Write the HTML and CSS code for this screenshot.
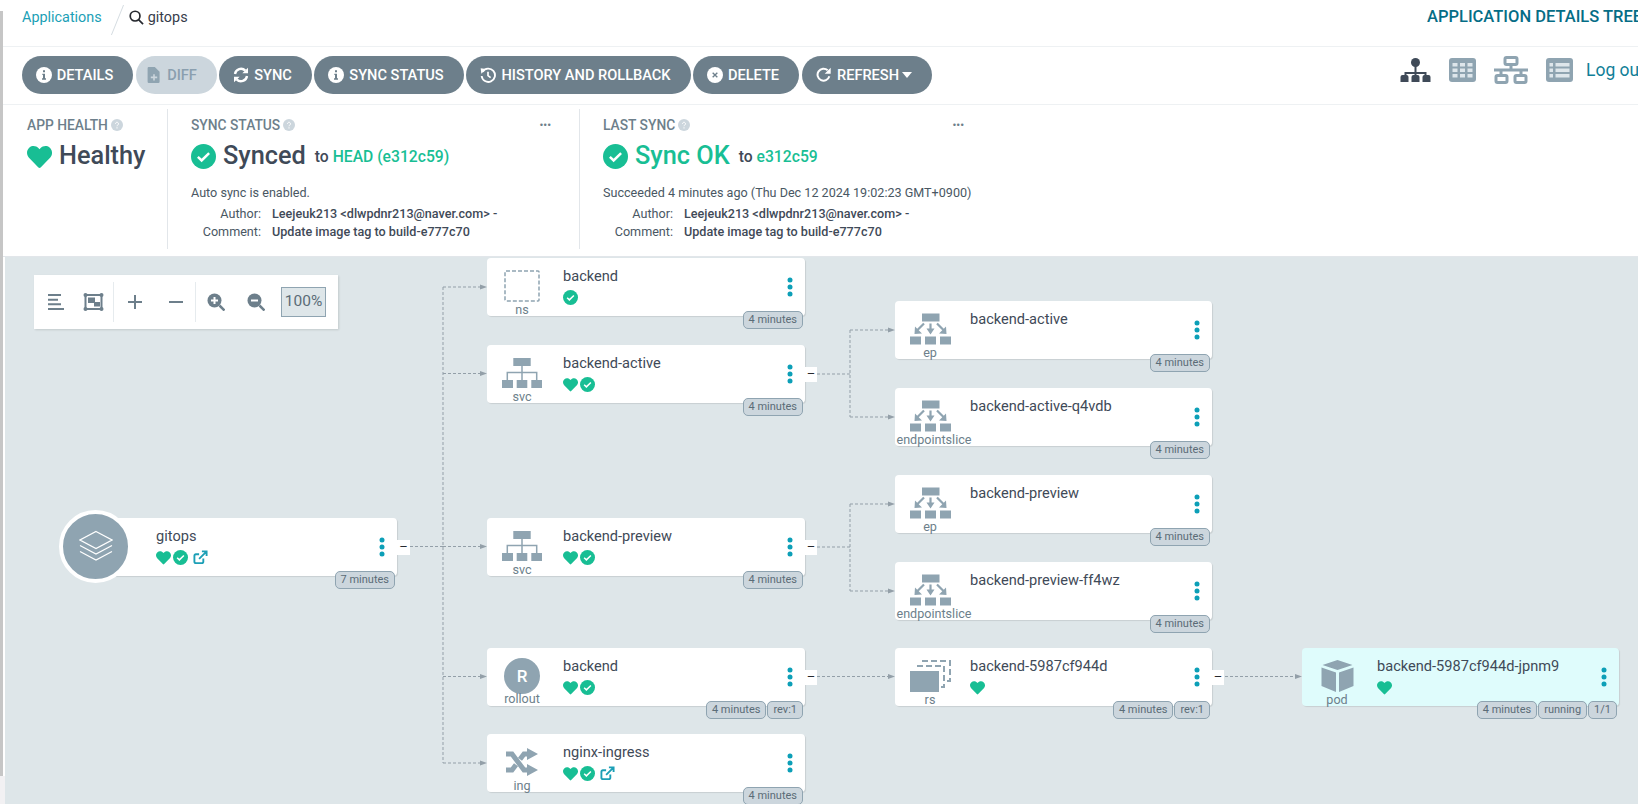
FILE: index.html
```html
<!DOCTYPE html>
<html lang="en">
<head>
<meta charset="utf-8">
<title>gitops - Application Details</title>
<link rel="stylesheet" href="styles.css">
</head>
<body>
<svg width="0" height="0" class="defs">
  <defs>
    <symbol id="heart" viewBox="0 0 512 512"><path d="M462 73c-55-47-137-38-188 14l-18 19-18-19C187 35 105 26 50 73c-63 54-66 150-10 208l194 200c12 13 33 13 45 0l194-200c56-58 53-154-11-208z"/></symbol>
    <symbol id="check" viewBox="0 0 24 24"><circle cx="12" cy="12" r="12"/><path d="M6.600 12.400l3.600 3.400 7.200-7" fill="none" stroke="#fff" stroke-width="2.400"/></symbol>
    <symbol id="ext" viewBox="0 0 16 16"><path d="M11 9v3.500a1.500 1.500 0 0 1-1.500 1.500H3a1.500 1.500 0 0 1-1.500-1.500V6A1.500 1.500 0 0 1 3 4.500h3.500M6.500 9.500l7-7M9.500 1.500h5v5" fill="none" stroke="currentColor" stroke-width="2"/></symbol>
    <symbol id="info" viewBox="0 0 24 24"><circle cx="12" cy="12" r="12" fill="#fff"/><path d="M9.500 10h4v7h1.500v2H9v-2h1.500v-5h-1zM10.500 5h3v3h-3z" fill="#6d7f8b"/></symbol>
    <symbol id="help" viewBox="0 0 24 24"><circle cx="12" cy="12" r="12" fill="#ccd6dd"/><path d="M9 9.500a3 3 0 1 1 4.500 2.600c-1 .6-1.500 1-1.500 2.400M12 16.500v2.500" fill="none" stroke="#fff" stroke-width="2"/></symbol>
    <symbol id="net" viewBox="0 0 40 30"><path d="M11.300 0h17.400v8H11.300zM0 22h11v8H0zM14.700 22h10.600v8H14.700zM29.300 22H40v8H29.300z"/><path d="M20 8v14M5.300 22v-7.400h29.400V22" fill="none" stroke="currentColor" stroke-width="1.500"/></symbol>
    <symbol id="ep" viewBox="0 0 41 31"><path d="M12 0h17.500v8H12zM0 23h11v8H0zM15 23h11v8H15zM30 23h11v8H30z"/><path d="M16.500 15h8l-4 6zM4.500 20.500L5 13l7 7zM36.500 20.500L36 13l-7 7z"/><path d="M20.500 10v7M14 10l-7 7M27 10l7 7" fill="none" stroke="currentColor" stroke-width="2.200"/></symbol>
    <symbol id="dots" viewBox="0 0 6 20"><circle cx="3" cy="3" r="2.500"/><circle cx="3" cy="10" r="2.500"/><circle cx="3" cy="17" r="2.500"/></symbol>
  </defs>
</svg>

<div class="page">
  <div class="side">
    <div class="side-strip"></div>
    <div class="side-foot"></div>
  </div>
  <main class="content">
    <header class="topbar">
      <nav class="crumbs">
        <a class="crumb-link">Applications</a>
        <span class="crumb-slash"></span>
        <svg class="crumb-search" viewBox="0 0 16 16"><circle cx="6.500" cy="6.500" r="5.200"/><path d="M10.200 10.200L15 15"/></svg>
        <span class="crumb-current">gitops</span>
      </nav>
      <h1 class="page-title">APPLICATION DETAILS TREE</h1>
    </header>

    <section class="toolbar">
      <div class="actions">
        <button class="btn w-details"><svg class="btn-ico"><use href="#info"/></svg>DETAILS</button>
        <button class="btn btn-off w-diff"><svg class="btn-ico" viewBox="0 0 16 20"><path d="M1 0h8l6 6v12.500a1.500 1.500 0 0 1-1.500 1.500h-12A1.500 1.500 0 0 1 0 18.500V1.500A1.500 1.500 0 0 1 1 0z" fill="#8fa4b1"/><path d="M7 9h2v3h3v2H9v3H7v-3H4v-2h3z" fill="#ccd6dd"/></svg>DIFF</button>
        <button class="btn w-sync"><svg class="btn-ico" viewBox="0 0 24 24"><path d="M3 10.500a9 9 0 0 1 15.500-5M21 13.500a9 9 0 0 1-15.500 5" fill="none" stroke="#fff" stroke-width="3.500"/><path d="M22.500 1v8.500H14zM1.500 23v-8.500H10z" fill="#fff"/></svg>SYNC</button>
        <button class="btn w-status"><svg class="btn-ico"><use href="#info"/></svg>SYNC STATUS</button>
        <button class="btn w-history"><svg class="btn-ico" viewBox="0 0 24 24"><path d="M4 7a10 10 0 1 1-1.500 6.500" fill="none" stroke="#fff" stroke-width="2.800"/><path d="M1 2l8 1-7 7z" fill="#fff"/><path d="M12 7v6l4 3" fill="none" stroke="#fff" stroke-width="2.500"/></svg>HISTORY AND ROLLBACK</button>
        <button class="btn w-delete"><svg class="btn-ico" viewBox="0 0 24 24"><circle cx="12" cy="12" r="12" fill="#fff"/><path d="M8.500 8.500l7 7M15.500 8.500l-7 7" stroke="#6d7f8b" stroke-width="2"/></svg>DELETE</button>
        <button class="btn w-refresh"><svg class="btn-ico" viewBox="0 0 24 24"><path d="M20 14a9 9 0 1 1-2.500-9" fill="none" stroke="#fff" stroke-width="3"/><path d="M22 1v9h-9z" fill="#fff"/></svg>REFRESH<span class="caret"></span></button>
      </div>
      <div class="view-tools">
        <svg class="vt vt-on" viewBox="0 0 30 24"><path d="M15 8V15M5 20v-5h20v5M15 15v5" fill="none" stroke="#3f4a58" stroke-width="2"/><circle cx="15" cy="4.500" r="4.500" fill="#3f4a58"/><path d="M0 19a2 2 0 0 1 2-2h4a2 2 0 0 1 2 2v5H0zM11 19a2 2 0 0 1 2-2h4a2 2 0 0 1 2 2v5h-8zM22 19a2 2 0 0 1 2-2h4a2 2 0 0 1 2 2v5h-8z" fill="#3f4a58"/></svg>
        <svg class="vt vt-grid" viewBox="0 0 27 24"><rect width="27" height="24" rx="3" fill="#8fa4b1"/><path d="M3.500 5h5v3.500h-5zM11 5h5v3.500h-5zM18.500 5h5v3.500h-5zM3.500 10.500h5V14h-5zM11 10.500h5V14h-5zM18.500 10.500h5V14h-5zM3.500 16h5v3.500h-5zM11 16h5v3.500h-5zM18.500 16h5v3.500h-5z" fill="#dee6eb"/></svg>
        <svg class="vt vt-netw" viewBox="0 0 34 28" fill="none" stroke="#8fa4b1" stroke-width="3"><rect x="11" y="1.500" width="12" height="7" rx="1.500"/><path d="M17 8.500V14M0 14h34"/><path d="M7 14v5M27 14v5"/><rect x="2" y="19.500" width="11" height="7" rx="1.500"/><rect x="21" y="19.500" width="11" height="7" rx="1.500"/></svg>
        <svg class="vt vt-list" viewBox="0 0 27 24"><rect width="27" height="24" rx="3" fill="#8fa4b1"/><path d="M3.500 5H7v3.500H3.500zM9.500 5h14v3.500h-14zM3.500 10.500H7V14H3.500zM9.500 10.500h14V14h-14zM3.500 16H7v3.500H3.500zM9.500 16h14v3.500h-14z" fill="#dee6eb"/></svg>
        <a class="logout">Log out</a>
      </div>
    </section>

    <section class="status">
      <div class="panel panel-health">
        <div class="panel-head">APP HEALTH<svg class="help"><use href="#help"/></svg></div>
        <div class="big"><svg class="big-heart"><use href="#heart"/></svg><span class="big-text">Healthy</span></div>
      </div>
      <div class="panel panel-sync">
        <div class="panel-head">SYNC STATUS<svg class="help"><use href="#help"/></svg><span class="more">•••</span></div>
        <div class="big"><svg class="big-check"><use href="#check"/></svg><span class="big-text">Synced</span><span class="to">to <b class="rev">HEAD (e312c59)</b></span></div>
        <div class="note">Auto sync is enabled.</div>
        <dl class="meta"><dt>Author:</dt><dd>Leejeuk213 &lt;dlwpdnr213@naver.com&gt; -</dd><dt>Comment:</dt><dd>Update image tag to build-e777c70</dd></dl>
      </div>
      <div class="panel panel-last">
        <div class="panel-head">LAST SYNC<svg class="help"><use href="#help"/></svg><span class="more">•••</span></div>
        <div class="big"><svg class="big-check"><use href="#check"/></svg><span class="big-text ok">Sync OK</span><span class="to">to <b class="rev">e312c59</b></span></div>
        <div class="note">Succeeded 4 minutes ago (Thu Dec 12 2024 19:02:23 GMT+0900)</div>
        <dl class="meta"><dt>Author:</dt><dd>Leejeuk213 &lt;dlwpdnr213@naver.com&gt; -</dd><dt>Comment:</dt><dd>Update image tag to build-e777c70</dd></dl>
      </div>
    </section>

    <section class="canvas">
      <svg class="edges" width="1633" height="547" viewBox="5 257 1633 547">
        <g class="edge">
          <path d="M410 546.500H443M443 287V763M443 287H482M443 373.500H482M443 546.500H482M443 676.500H482M443 763H482"/>
          <path d="M817 374H850M850 330V417M850 330H890M850 417H890"/>
          <path d="M817 547H850M850 504V591M850 504H890M850 591H890"/>
          <path d="M817 676.500H890"/>
          <path d="M1225 676.500H1297"/>
        </g>
        <g class="arrows">
          <path d="M480 284.500l7 2.500-7 2.500zM480 371l7 2.500-7 2.500zM480 544l7 2.500-7 2.500zM480 674l7 2.500-7 2.500zM480 760.500l7 2.500-7 2.500z"/>
          <path d="M888 327.500l7 2.500-7 2.500zM888 414.500l7 2.500-7 2.500zM888 501.500l7 2.500-7 2.500zM888 588.500l7 2.500-7 2.500zM888 674l7 2.500-7 2.500zM1295 674l7 2.500-7 2.500z"/>
        </g>
      </svg>

      <div class="zoombar">
        <div class="zb-group">
          <svg class="zb-ico" viewBox="0 0 16 16"><path d="M0 1h13M0 5.700h10M0 10.300h13M0 15h16"/></svg>
          <svg class="zb-ico zb-fit" viewBox="0 0 21 18"><path d="M2.500 2h16v14h-16z"/><path class="zb-fill" d="M5 4.500h7v5.500H5zM11 9h6v4.500h-6z"/><circle class="zb-fill" cx="2.500" cy="2" r="2"/><circle class="zb-fill" cx="18.500" cy="2" r="2"/><circle class="zb-fill" cx="2.500" cy="16" r="2"/><circle class="zb-fill" cx="18.500" cy="16" r="2"/></svg>
        </div>
        <div class="zb-group zb-pm">
          <svg class="zb-ico" viewBox="0 0 16 16"><path d="M8 1v14M1 8h14"/></svg>
          <svg class="zb-ico" viewBox="0 0 16 16"><path d="M1 8h14"/></svg>
        </div>
        <div class="zb-group zb-zoom">
          <svg class="zb-ico zb-mag" viewBox="0 0 18 18"><circle class="zb-disc" cx="7.500" cy="7.500" r="7"/><path class="zb-w" d="M7.500 4v7M4 7.500h7"/><path d="M12.500 12.500L17.500 17.500"/></svg>
          <svg class="zb-ico zb-mag" viewBox="0 0 18 18"><circle class="zb-disc" cx="7.500" cy="7.500" r="7"/><path class="zb-w" d="M4 7.500h7"/><path d="M12.500 12.500L17.500 17.500"/></svg>
          <div class="zb-value">100%</div>
        </div>
      </div>

      <article class="node app-node pos-gitops">
        <div class="app-circle"><svg viewBox="0 0 34 32" class="layers"><path d="M17 1L33 9.500 17 18 1 9.500zM1 15l16 8.500L33 15M1 21l16 8.500L33 21"/></svg></div>
        <div class="node-body app-body"><div class="name">gitops</div><div class="badges"><svg class="b-heart"><use href="#heart"/></svg><svg class="b-check"><use href="#check"/></svg><svg class="b-ext"><use href="#ext"/></svg></div></div>
        <svg class="dots"><use href="#dots"/></svg>
        <div class="pills"><span class="pill">7 minutes</span></div>
        <span class="collapse">–</span>
      </article>

      <article class="node pos-a1">
        <div class="kind"><svg class="k-ns" viewBox="0 0 36 32"><rect x="1" y="1" width="34" height="30" rx="1"/></svg><span>ns</span></div>
        <div class="node-body"><div class="name">backend</div><div class="badges"><svg class="b-check"><use href="#check"/></svg></div></div>
        <svg class="dots"><use href="#dots"/></svg>
        <div class="pills"><span class="pill">4 minutes</span></div>
      </article>

      <article class="node pos-a2">
        <div class="kind"><svg class="k-net"><use href="#net"/></svg><span>svc</span></div>
        <div class="node-body"><div class="name">backend-active</div><div class="badges"><svg class="b-heart"><use href="#heart"/></svg><svg class="b-check"><use href="#check"/></svg></div></div>
        <svg class="dots"><use href="#dots"/></svg>
        <div class="pills"><span class="pill">4 minutes</span></div>
        <span class="collapse">–</span>
      </article>

      <article class="node pos-a3">
        <div class="kind"><svg class="k-net"><use href="#net"/></svg><span>svc</span></div>
        <div class="node-body"><div class="name">backend-preview</div><div class="badges"><svg class="b-heart"><use href="#heart"/></svg><svg class="b-check"><use href="#check"/></svg></div></div>
        <svg class="dots"><use href="#dots"/></svg>
        <div class="pills"><span class="pill">4 minutes</span></div>
        <span class="collapse">–</span>
      </article>

      <article class="node pos-a4">
        <div class="kind kind-roll"><div class="k-roll">R</div><span>rollout</span></div>
        <div class="node-body"><div class="name">backend</div><div class="badges"><svg class="b-heart"><use href="#heart"/></svg><svg class="b-check"><use href="#check"/></svg></div></div>
        <svg class="dots"><use href="#dots"/></svg>
        <div class="pills"><span class="pill">4 minutes</span><span class="pill">rev:1</span></div>
        <span class="collapse">–</span>
      </article>

      <article class="node pos-a5">
        <div class="kind"><svg class="k-ing" viewBox="0 0 32 28"><path d="M0 6h6l12 16h4M0 22h6l4-5.300M14 11.300L18 6h4" fill="none" stroke="currentColor" stroke-width="5"/><path d="M21 0l11 6-11 6zM21 16l11 6-11 6z"/></svg><span>ing</span></div>
        <div class="node-body"><div class="name">nginx-ingress</div><div class="badges"><svg class="b-heart"><use href="#heart"/></svg><svg class="b-check"><use href="#check"/></svg><svg class="b-ext"><use href="#ext"/></svg></div></div>
        <svg class="dots"><use href="#dots"/></svg>
        <div class="pills"><span class="pill">4 minutes</span></div>
      </article>

      <article class="node node-narrow pos-b1">
        <div class="kind"><svg class="k-ep"><use href="#ep"/></svg><span>ep</span></div>
        <div class="node-body"><div class="name">backend-active</div></div>
        <svg class="dots"><use href="#dots"/></svg>
        <div class="pills"><span class="pill">4 minutes</span></div>
      </article>

      <article class="node node-narrow pos-b2">
        <div class="kind kind-long"><svg class="k-ep"><use href="#ep"/></svg><span>endpointslice</span></div>
        <div class="node-body"><div class="name">backend-active-q4vdb</div></div>
        <svg class="dots"><use href="#dots"/></svg>
        <div class="pills"><span class="pill">4 minutes</span></div>
      </article>

      <article class="node node-narrow pos-b3">
        <div class="kind"><svg class="k-ep"><use href="#ep"/></svg><span>ep</span></div>
        <div class="node-body"><div class="name">backend-preview</div></div>
        <svg class="dots"><use href="#dots"/></svg>
        <div class="pills"><span class="pill">4 minutes</span></div>
      </article>

      <article class="node node-narrow pos-b4">
        <div class="kind kind-long"><svg class="k-ep"><use href="#ep"/></svg><span>endpointslice</span></div>
        <div class="node-body"><div class="name">backend-preview-ff4wz</div></div>
        <svg class="dots"><use href="#dots"/></svg>
        <div class="pills"><span class="pill">4 minutes</span></div>
      </article>

      <article class="node node-narrow pos-b5">
        <div class="kind"><svg class="k-rs" viewBox="0 0 41 32"><path d="M12 1h28v20h-3" fill="none" stroke="currentColor" stroke-width="2" stroke-dasharray="6 3"/><path d="M7 6h27v21h-4" fill="none" stroke="currentColor" stroke-width="2" stroke-dasharray="6 3"/><path d="M0 11h29v21H0z"/></svg><span>rs</span></div>
        <div class="node-body"><div class="name">backend-5987cf944d</div><div class="badges"><svg class="b-heart"><use href="#heart"/></svg></div></div>
        <svg class="dots"><use href="#dots"/></svg>
        <div class="pills"><span class="pill">4 minutes</span><span class="pill">rev:1</span></div>
        <span class="collapse">–</span>
      </article>

      <article class="node node-narrow node-pod pos-c1">
        <div class="kind"><svg class="k-pod" viewBox="0 0 32 32"><path d="M16 0l15 5-15 5L1 5zM0 7.500l14.500 5V32L0 26zM32 7.500l-14.500 5V32L32 26z"/></svg><span>pod</span></div>
        <div class="node-body"><div class="name">backend-5987cf944d-jpnm9</div><div class="badges"><svg class="b-heart"><use href="#heart"/></svg></div></div>
        <svg class="dots"><use href="#dots"/></svg>
        <div class="pills"><span class="pill">4 minutes</span><span class="pill">running</span><span class="pill">1/1</span></div>
      </article>
    </section>
  </main>
</div>
</body>
</html>
```

FILE: styles.css
```css
* { box-sizing: border-box; }
html, body { margin: 0; height: 100%; overflow: hidden; }
body { font-family: Roboto, "Liberation Sans", sans-serif; color: #363c4a; background: #fff; font-size: 14px; }
.defs { position: absolute; }
.page { display: flex; width: 1638px; height: 804px; overflow: hidden; }
.side { width: 5px; flex: none; display: flex; flex-direction: column; padding-top: 11px; }
.side-strip { width: 3px; height: 765px; background: #c6c6c6; flex: none; }
.side-foot { flex: 1; background: #f2f1f3; }
.content { flex: 1; min-width: 0; display: flex; flex-direction: column; }

.topbar { height: 47px; flex: none; display: flex; justify-content: space-between; border-bottom: 1px solid #eef1f3; margin-left: -2px; padding: 0 0 0 19px; }
.crumbs { display: flex; align-items: flex-start; padding-top: 9px; line-height: 17px; }
.crumb-link { color: #1c9fb6; font-size: 14.400px; }
.crumb-slash { width: 1px; height: 30px; background: #d5dce1; margin: -4px 0 0 10px; transform: skewX(-22deg) translateX(5px); }
.crumb-search { width: 15px; height: 15px; margin: 1px 4px 0 16px; fill: none; stroke: #26292f; stroke-width: 1.800; }
.crumb-current { color: #363c4a; font-size: 14.400px; }
.page-title { margin: 8px 0 0; font-size: 16.500px; line-height: 18px; font-weight: 500; color: #056d86; white-space: nowrap; width: 211px; overflow: hidden; }

.toolbar { height: 58px; flex: none; display: flex; justify-content: space-between; border-bottom: 1px solid #eef1f3; margin-left: -2px; padding: 9px 0 0 19px; }
.actions { display: flex; align-items: flex-start; }
.btn { height: 38px; border: 0; border-radius: 19px; background: #6d7f8b; color: #fff; font: 500 14.600px/38px Roboto, sans-serif; padding: 0 6px 0 0; display: flex; align-items: center; justify-content: center; white-space: nowrap; }
.btn-ico { width: 16px; height: 16px; margin-right: 5px; flex: none; }
.btn-off { background: #ccd6dd; color: #8a9faf; padding-right: 10px; }
.w-details { width: 111px; margin-right: 3px; }
.w-diff { width: 81px; margin-right: 2px; }
.w-sync { width: 93px; margin-right: 2px; }
.w-status { width: 150px; margin-right: 2px; }
.w-history { width: 225px; margin-right: 2px; }
.w-delete { width: 106px; margin-right: 3px; }
.w-refresh { width: 130px; }
.caret { width: 0; height: 0; border: 5px solid transparent; border-top: 6px solid #fff; border-bottom: 0; margin-left: 3px; }

.view-tools { width: 238px; flex: none; overflow: hidden; display: flex; align-items: flex-start; padding-top: 2px; }
.vt { height: 24px; flex: none; }
.vt-on { width: 31px; margin-right: 18px; }
.vt-grid { width: 27px; margin-right: 18px; }
.vt-netw { width: 34px; height: 28px; margin: -2px 18px 0 0; }
.vt-list { width: 27px; margin-right: 13px; }
.logout { font-size: 17.500px; line-height: 24px; color: #117f98; white-space: nowrap; }

.status { height: 152px; flex: none; display: flex; border-bottom: 1px solid #e2e6ea; margin-left: -2px; padding-top: 4px; }
.panel { height: 140px; }
.panel-health { width: 165px; padding-left: 24px; border-right: 1px solid #e2e6ea; }
.panel-sync { width: 412px; padding-left: 23px; border-right: 1px solid #e2e6ea; }
.panel-last { width: 412px; padding-left: 23px; }
.panel-head { display: flex; align-items: center; font-size: 13.800px; font-weight: 500; color: #6d7f8b; height: 16px; margin-top: 8px; white-space: nowrap; }
.help { width: 12px; height: 12px; margin-left: 3px; }
.more { margin-left: auto; margin-right: 28px; font-size: 11px; letter-spacing: 0; color: #6d7f8b; }
.big { display: flex; align-items: center; height: 34px; margin-top: 6px; }
.big-heart { width: 25px; height: 25px; fill: #18be94; margin-right: 7px; flex: none; }
.big-check { width: 25px; height: 25px; fill: #18be94; margin-right: 7px; flex: none; }
.big-text { font-size: 25.300px; font-weight: 500; line-height: 34px; color: #3f4a58; white-space: nowrap; }
.big-text.ok { color: #18be94; }
.to { font-size: 15.700px; font-weight: 500; color: #3f4a58; margin-left: 9px; white-space: nowrap; }
.rev { color: #18be94; font-weight: 500; }
.note { font-size: 12.600px; color: #495763; margin-top: 12px; line-height: 16px; white-space: nowrap; }
.meta { display: grid; grid-template-columns: 70px auto; column-gap: 11px; font-size: 12.600px; line-height: 18px; margin: 4px 0 0; white-space: nowrap; justify-content: start; }
.meta dt { text-align: right; color: #495763; }
.meta dd { margin: 0; font-weight: 500; color: #3f4a58; }

.canvas { position: relative; flex: 1; background: #dee6e9; overflow: hidden; }
.edges { position: absolute; left: 0; top: 0; }
.edge path { fill: none; stroke: #939fa8; stroke-width: 1; stroke-dasharray: 3 2; }
.arrows path { fill: #939fa8; }

.zoombar { position: absolute; left: 29px; top: 18px; width: 304px; height: 54px; background: #fff; box-shadow: 1px 1px 2px rgba(0,0,0,.12); display: flex; align-items: center; }
.zb-group { display: flex; align-items: center; height: 40px; }
.zb-group:first-child { padding-left: 14px; gap: 19px; width: 80px; border-right: 1px solid #e6ebee; }
.zb-pm { width: 82px; padding-left: 13px; gap: 25px; border-right: 1px solid #e6ebee; }
.zb-zoom { padding-left: 11px; gap: 22px; }
.zb-ico { width: 16px; height: 16px; flex: none; fill: none; stroke: #6d7f8b; stroke-width: 2; }
.zb-fit { width: 21px; height: 18px; }
.zb-fit path { stroke-width: 2; }
.zb-fit .zb-fill { fill: #6d7f8b; stroke: none; }
.zb-mag { width: 18px; height: 18px; stroke-width: 2.500; }
.zb-disc { fill: #6d7f8b; stroke: none; }
.zb-w { stroke: #fff; stroke-width: 2; }
.zb-value { width: 45px; height: 30px; margin-left: -6px; background: #dee6e9; border: 1px solid #8fa4b1; font-size: 15.500px; line-height: 26px; text-align: center; color: #5b6c77; }

.node { position: absolute; width: 318px; height: 58px; background: #fff; border-radius: 4px; box-shadow: 1px 1px 1px rgba(0,0,0,.1); display: flex; }
.node-narrow { width: 317px; }
.node-narrow .node-body { padding-left: 5px; }
.node-pod { background: #dffcfc; }
.pos-gitops { left: 55px; top: 261px; width: 337px; background: transparent; box-shadow: none; }
.pos-a1 { left: 482px; top: 1px; }
.pos-a2 { left: 482px; top: 88px; }
.pos-a3 { left: 482px; top: 261px; }
.pos-a4 { left: 482px; top: 391px; }
.pos-a5 { left: 482px; top: 477px; }
.pos-b1 { left: 890px; top: 44px; }
.pos-b2 { left: 890px; top: 131px; }
.pos-b3 { left: 890px; top: 218px; }
.pos-b4 { left: 890px; top: 305px; }
.pos-b5 { left: 890px; top: 391px; }
.pos-c1 { left: 1297px; top: 391px; }

.kind { width: 70px; flex: none; display: flex; flex-direction: column; align-items: center; padding-top: 12px; color: #8fa4b1; fill: #8fa4b1; }
.kind span { color: #6d7f8b; font-size: 12.600px; line-height: 14px; margin-top: 1px; white-space: nowrap; }
.kind svg { display: block; height: 32px; flex: none; }
.kind-long span { margin-left: 8px; }
.kind-roll { padding-top: 10px; }
.kind-roll span { margin-top: -2px; }
.k-ns { width: 36px; fill: none; stroke: #8fa4b1; stroke-width: 1.500; stroke-dasharray: 4 2; }
.k-net { width: 40px; }
.k-ep { width: 41px; }
.k-ing { width: 32px; }
.k-rs { width: 41px; }
.k-pod { width: 33px; }
.k-roll { width: 36px; height: 36px; border-radius: 50%; background: #8fa4b1; color: #fff; font-size: 17px; font-weight: 500; line-height: 36px; text-align: center; flex: none; }

.node-body { padding: 9px 0 0 6px; min-width: 0; }
.name { font-size: 14.600px; line-height: 18px; color: #3f4a58; white-space: nowrap; }
.badges { display: flex; align-items: center; height: 18px; margin-top: 3px; gap: 2px; }
.b-heart { width: 15px; height: 15px; fill: #18be94; }
.b-check { width: 15px; height: 15px; fill: #18be94; }
.b-ext { width: 15px; height: 15px; color: #1c9fb6; margin-left: 3px; }
.dots { position: absolute; right: 12px; top: 19px; width: 6px; height: 20px; fill: #0c9fb7; }
.pills { position: absolute; right: 2px; bottom: -13px; display: flex; gap: 1px; }
.pill { height: 18px; padding: 0 5px; background: #ccd6dd; border: 1px solid #8fa4b1; border-radius: 5px; font-size: 11px; line-height: 16px; color: #5b6c77; white-space: nowrap; }
.collapse { position: absolute; right: -12px; top: 22px; width: 12px; height: 15px; background: #fff; font-size: 13px; line-height: 14px; text-align: center; color: #26292f; }
.app-node .collapse { right: -13px; width: 13px; }

.app-circle { position: absolute; left: -1px; top: -8px; width: 73px; height: 73px; border-radius: 50%; background: #8fa4b1; border: 4px solid #fff; z-index: 1; display: flex; align-items: center; justify-content: center; }
.layers { width: 34px; height: 33px; fill: none; stroke: #fff; stroke-width: 1.200; }
.app-body { margin-left: 36px; flex: 1; background: #fff; border-radius: 4px; box-shadow: 1px 1px 1px rgba(0,0,0,.1); padding-left: 60px; }
```
